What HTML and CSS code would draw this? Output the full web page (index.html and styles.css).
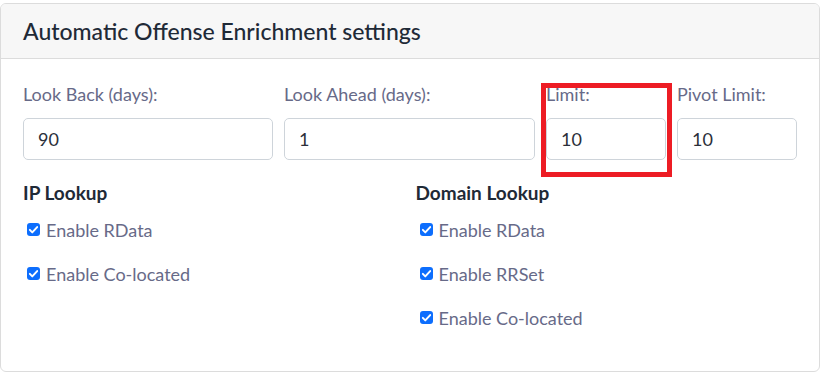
FILE: index.html
```html
<!DOCTYPE html>
<html lang="en">
<head>
  <meta charset="UTF-8">
  <title>Automatic Offense Enrichment settings</title>
  <link rel="stylesheet" href="styles.css">
</head>
<body>
  <div class="card">
    <div class="card-header">
      <h5>Automatic Offense Enrichment settings</h5>
    </div>
    <div class="card-body">
      <div class="fields">
        <div class="field">
          <label>Look Back (days):</label>
          <div class="input">90</div>
        </div>
        <div class="field">
          <label>Look Ahead (days):</label>
          <div class="input">1</div>
        </div>
        <div class="field">
          <label>Limit:</label>
          <div class="input">10</div>
        </div>
        <div class="field">
          <label>Pivot Limit:</label>
          <div class="input">10</div>
        </div>
      </div>

      <div class="lookups">
        <div class="lookup">
          <h6>IP Lookup</h6>
          <div class="check"><span class="box"><svg viewBox="0 0 16 16"><path d="M3.5 8.5l3 3 6-6.5" /></svg></span>Enable RData</div>
          <div class="check"><span class="box"><svg viewBox="0 0 16 16"><path d="M3.5 8.5l3 3 6-6.5" /></svg></span>Enable Co-located</div>
        </div>
        <div class="lookup">
          <h6>Domain Lookup</h6>
          <div class="check"><span class="box"><svg viewBox="0 0 16 16"><path d="M3.5 8.5l3 3 6-6.5" /></svg></span>Enable RData</div>
          <div class="check"><span class="box"><svg viewBox="0 0 16 16"><path d="M3.5 8.5l3 3 6-6.5" /></svg></span>Enable RRSet</div>
          <div class="check"><span class="box"><svg viewBox="0 0 16 16"><path d="M3.5 8.5l3 3 6-6.5" /></svg></span>Enable Co-located</div>
        </div>
      </div>
    </div>
  </div>
  <div class="highlight"></div>
</body>
</html>
```

FILE: styles.css
```css
body {
  margin: 0;
  background: #fff;
  font-family: Lato, "Liberation Sans", sans-serif;
  color: #212529;
}
.card {
  margin-top: 3px;
  width: 820px;
  height: 369px;
  box-sizing: border-box;
  border: 1px solid #dcdcdc;
  border-radius: 6px;
  overflow: hidden;
}
.card-header {
  height: 54px;
  background: #f7f7f7;
  border-bottom: 1px solid #dcdcdc;
  padding: 0 22px;
  display: flex;
  align-items: center;
}
.card-header h5 {
  margin: 0;
  font-size: 23px;
  font-weight: 500;
  color: #1f2a37;
}
.card-body {
  padding: 22px 22px 0;
}
.fields {
  display: grid;
  grid-template-columns: 250px 251px 120px 120px;
  column-gap: 11px;
}
.field label {
  display: block;
  font-size: 18px;
  line-height: 27px;
  color: #676a88;
  margin-bottom: 10px;
}
.input {
  height: 42px;
  box-sizing: border-box;
  border: 1px solid #ced4da;
  border-radius: 5px;
  padding: 0 14px;
  display: flex;
  align-items: center;
  font-size: 18px;
  color: #2b2f3a;
}
.lookups {
  display: grid;
  grid-template-columns: 1fr 1fr;
  column-gap: 11px;
  margin-top: 19px;
}
.lookup h6 {
  margin: 0 0 10px;
  font-size: 19px;
  font-weight: 700;
  line-height: 27px;
  color: #1f2a37;
}
.check {
  display: flex;
  align-items: center;
  height: 27px;
  margin: 0 0 17px 4px;
  font-size: 18px;
  color: #676a88;
}
.box {
  width: 13px;
  height: 13px;
  border-radius: 3px;
  background: #0d6efd;
  margin-right: 6px;
  display: flex;
}
.box svg {
  width: 13px;
  height: 13px;
  fill: none;
  stroke: #fff;
  stroke-width: 2.4;
  stroke-linecap: round;
  stroke-linejoin: round;
}
.highlight {
  position: absolute;
  left: 541px;
  top: 83px;
  width: 131px;
  height: 94px;
  box-sizing: border-box;
  border: 5px solid #ed1c24;
}
```
